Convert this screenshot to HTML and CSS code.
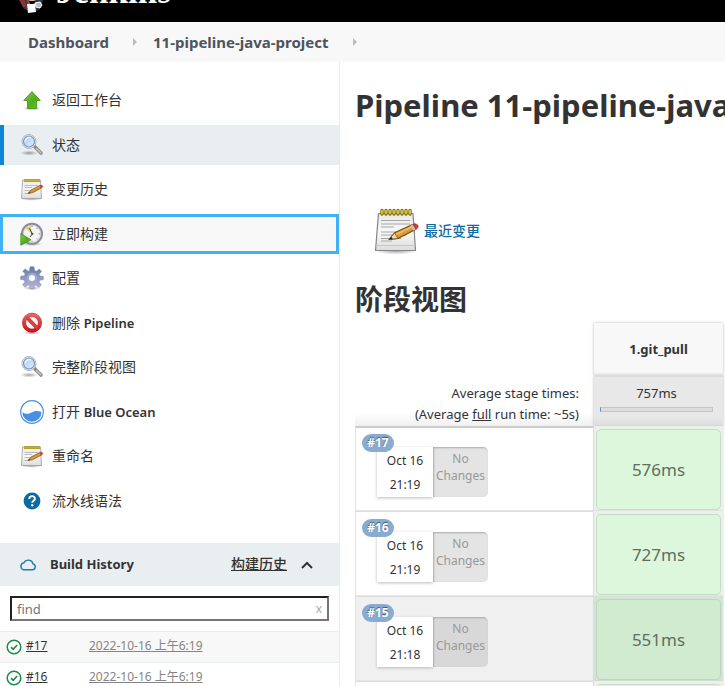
FILE: index.html
```html
<!DOCTYPE html>
<html lang="zh-CN">
<head>
<meta charset="utf-8">
<meta name="viewport" content="width=device-width, initial-scale=1">
<title>11-pipeline-java-project [Jenkins]</title>
<link rel="stylesheet" href="styles.css">
</head>
<body>
<svg class="defs" aria-hidden="true">
  <defs>
    <linearGradient id="g-green" x1="0" y1="0" x2="1" y2="1"><stop offset="0" stop-color="#8bc957"/><stop offset=".55" stop-color="#4fae1c"/><stop offset="1" stop-color="#65ca20"/></linearGradient>
    <linearGradient id="g-paper" x1="0" y1="0" x2="0" y2="1"><stop offset="0" stop-color="#e9e9e9"/><stop offset=".5" stop-color="#f8f8f8"/><stop offset="1" stop-color="#dcdcdc"/></linearGradient>
    <linearGradient id="g-lens" x1="0" y1="0" x2="1" y2="1"><stop offset="0" stop-color="#a9c9ee"/><stop offset="1" stop-color="#e3effb"/></linearGradient>
    <linearGradient id="g-gear" x1="0" y1="0" x2="0" y2="1"><stop offset="0" stop-color="#5d7ba8"/><stop offset="1" stop-color="#c0b6dd"/></linearGradient>
    <linearGradient id="g-red" x1="0" y1="0" x2="0" y2="1"><stop offset="0" stop-color="#e46a6a"/><stop offset="1" stop-color="#cf1515"/></linearGradient>
    <radialGradient id="g-shadow"><stop offset="0" stop-color="#000" stop-opacity=".35"/><stop offset="1" stop-color="#000" stop-opacity="0"/></radialGradient>
    <symbol id="i-up" viewBox="0 0 24 24">
      <ellipse cx="12" cy="20.500" rx="10" ry="2" fill="url(#g-shadow)"/>
      <path d="M12 3.500 20.300 12.500H16.500V20.500H7.500V12.500H3.700Z" fill="url(#g-green)" stroke="#3f9312" stroke-width=".8" stroke-linejoin="round"/>
    </symbol>
    <symbol id="i-search" viewBox="0 0 24 24">
      <ellipse cx="9" cy="20" rx="9" ry="2.500" fill="url(#g-shadow)"/>
      <path d="M15 14 21 20" stroke="#8a8a8a" stroke-width="3.600" stroke-linecap="round"/>
      <path d="M16.500 15.500 20.800 19.800" stroke="#c4c4c4" stroke-width="1.600" stroke-linecap="round"/>
      <circle cx="9" cy="8.500" r="7" fill="#f4f4f4" stroke="#b2b4b2" stroke-width="1"/>
      <circle cx="9" cy="8.500" r="5.500" fill="url(#g-lens)" stroke="#6a96d0" stroke-width="1.100"/>
      <path d="M5.200 8.500a4 4 0 0 1 5.600-3.700" stroke="#e8f2fd" stroke-width="1.500" fill="none"/>
    </symbol>
    <symbol id="i-note" viewBox="0 0 48 48">
      <ellipse cx="23" cy="44" rx="21" ry="3.500" fill="url(#g-shadow)"/>
      <path d="M5.500 6.500H40L42.500 43.500H2.500Z" fill="url(#g-paper)" stroke="#858585" stroke-width="1.200" stroke-linejoin="round"/>
      <path d="M3 38.500H42" stroke="#c8c8c8"/>
      <path d="M8 13.500H37M8 17H37M8 20H21M8 25H37M8 28H33M8 31.500H28M8 34H19" stroke="#a5a7a5" stroke-width="1"/>
      <path d="M9 3.500V7M13 3.500V7M17 3.500V7M21 3.500V7M25 3.500V7M29 3.500V7M33 3.500V7M37 3.500V7" stroke="#7c6c0a" stroke-width="3.400" stroke-linecap="round"/>
      <path d="M9 3.500V6.500M13 3.500V6.500M17 3.500V6.500M21 3.500V6.500M25 3.500V6.500M29 3.500V6.500M33 3.500V6.500M37 3.500V6.500" stroke="#e2cf35" stroke-width="1.700" stroke-linecap="round"/>
      <path d="M16 32.500 21.500 25.800 39.500 17.500 42.500 22.500 25 31.500Z" fill="#d89a38" stroke="#754b0d" stroke-width="1.100" stroke-linejoin="round"/>
      <path d="M16 32.500 21.500 25.800 25 31.500Z" fill="#f0d5a5" stroke="#754b0d" stroke-width=".8"/>
      <path d="M16 32.500 18.300 29.700 19.800 32Z" fill="#222"/>
      <path d="M23 27.500 40 19.300" stroke="#f0c169" stroke-width="1.500"/>
      <path d="M37.500 18.400 40 17.200 43 22.200 40.500 23.500Z" fill="#bfc4c9"/>
      <path d="M40 17.200C44 15.500 47.500 20 43 22.300Z" fill="#e13b30" stroke="#b22520" stroke-width=".8"/>
    </symbol>
    <symbol id="i-note-small" viewBox="0 0 24 24">
      <ellipse cx="11.500" cy="22" rx="10.500" ry="1.800" fill="url(#g-shadow)"/>
      <path d="M2.500 3H20.500L21.500 21.500H1.500Z" fill="url(#g-paper)" stroke="#9a9a9a" stroke-width=".8" stroke-linejoin="round"/>
      <path d="M4.500 8.500H18M4.500 10.500H12M4.500 13.500H15M4.500 16.500H9" stroke="#b4b4b4" stroke-width=".9"/>
      <path d="M4 3.500H20" stroke="#a8952a" stroke-width="3"/>
      <path d="M4.500 3.500H20" stroke="#dccb4c" stroke-width="2.200" stroke-dasharray="1 1"/>
      <path d="M8 16.500 11 13 20 8.500 21.500 11 12.500 15.700Z" fill="#d89a38" stroke="#855a18" stroke-width=".8" stroke-linejoin="round"/>
      <path d="M8 16.500 9.300 15 10 16Z" fill="#222"/>
      <path d="M20 8.500C22 7.500 24 9.700 21.500 11Z" fill="#e13b30" stroke="#c33" stroke-width=".7"/>
    </symbol>
    <symbol id="i-clock" viewBox="0 0 24 24">
      <ellipse cx="12" cy="22" rx="11" ry="2" fill="url(#g-shadow)"/>
      <circle cx="12" cy="11.800" r="10" fill="#f3f3f0" stroke="#8a8aa2" stroke-width="2"/>
      <circle cx="12" cy="11.800" r="8.600" fill="none" stroke="#c5c5cb" stroke-width=".7"/>
      <path d="M12 11.800 6 6.300A8.300 8.300 0 0 1 10.700 4Z" fill="#e2c862"/>
      <path d="M9.500 6.500 12.300 12 10 15" fill="none" stroke="#444" stroke-width="1"/>
      <circle cx="12.300" cy="11.800" r="1.100" fill="#444"/>
      <path d="M12 3.500V5M20 11.800H18.500M12 20.200V18.800M17.500 6 16.500 7M17.500 17.500 16.500 16.500" stroke="#888" stroke-width=".9"/>
      <path d="M.8 11.500 11 17.800.8 23.300Z" fill="url(#g-green)" stroke="#37870c" stroke-width=".7"/>
    </symbol>
    <symbol id="i-gear" viewBox="0 0 24 24">
      <ellipse cx="12" cy="22" rx="9" ry="2" fill="url(#g-shadow)"/>
      <path fill="url(#g-gear)" stroke="#7f8cac" stroke-width=".6" stroke-linejoin="round" fill-rule="evenodd" d="M10 .8H14L14.600 4.500 16.400 5.300 19.400 3 21.500 5.500 19.100 8.200 19.700 10 23.300 10.400V13.600L19.700 14.200 19 16 21.300 19 18.800 21.300 15.900 19 14.200 19.700 13.800 23H10.300L9.700 19.600 8 18.900 5 21.200 2.700 18.700 5 15.800 4.300 14 .7 13.500V10.300L4.400 9.700 5.200 8 2.800 5.200 5.200 2.900 8.100 5.200 9.600 4.600ZM12 8.500a3.500 3.500 0 1 0 0 7 3.500 3.500 0 0 0 0-7Z"/>
      <circle cx="12" cy="12" r="4.600" fill="none" stroke="#a3abcf" stroke-width="1.200"/>
    </symbol>
    <symbol id="i-stop" viewBox="0 0 24 24">
      <ellipse cx="12" cy="21.800" rx="9" ry="1.800" fill="url(#g-shadow)"/>
      <circle cx="12" cy="11.700" r="8" fill="#f4f4f4" stroke="#c23434" stroke-width="4"/>
      <path d="M6.400 6 17.600 17.400" stroke="#c23434" stroke-width="3.600"/>
      <circle cx="12" cy="11.700" r="8" fill="none" stroke="url(#g-red)" stroke-width="3"/>
      <path d="M6.400 6 17.600 17.400" stroke="#df4040" stroke-width="2.600"/>
    </symbol>
    <symbol id="i-ocean" viewBox="0 0 24 24">
      <circle cx="12" cy="12" r="11.300" fill="#fff" stroke="#4a90e2" stroke-width="1.200"/>
      <path d="M2.300 12.300C6 14.300 8.500 14.300 11.500 12.500S17 10.300 21.500 12A9.600 9.600 0 0 1 2.300 12.300Z" fill="#4a90e2"/>
    </symbol>
    <symbol id="i-help" viewBox="0 0 24 24">
      <circle cx="12" cy="12" r="8.400" fill="#0b6aa2"/>
      <path d="M9.300 9.900C9.300 6.300 14.900 6.300 14.900 9.700 14.900 11.800 12.200 11.600 12.200 13.800" fill="none" stroke="#fff" stroke-width="1.900"/>
      <circle cx="12.200" cy="16.200" r="1.200" fill="#fff"/>
    </symbol>
    <symbol id="i-ok" viewBox="0 0 16 16">
      <circle cx="8" cy="8" r="6.800" fill="#fff" stroke="#1e884c" stroke-width="1.500"/>
      <path d="M5 8.200 7.200 10.300 11.100 6" fill="none" stroke="#1e884c" stroke-width="1.600"/>
    </symbol>
  </defs>
</svg>

<header class="page-header">
  <a class="brand" href="#">
    <svg class="brand-mark" viewBox="0 0 28 36" aria-hidden="true">
      <circle cx="14" cy="12" r="11" fill="#f0d6b7"/>
      <path d="M1 22 8 19 13 28 20 20 25 22 22 31 17 34 6 31Z" fill="#2e3c49"/>
      <path d="M1 21 6 20 9 29 5 29Z" fill="#8e3037"/>
      <path d="M8 20 12 25 11 29Z" fill="#d33833"/>
      <path d="M9 26 17 26 18 34 10 35Z" fill="#fff"/>
      <path d="M17 25 22 24 24 27 22 30 18 29Z" fill="#bbb" stroke="#fff"/>
    </svg>
    <span class="brand-name">Jenkins</span>
  </a>
</header>

<nav class="breadcrumbs" aria-label="Breadcrumb">
  <a href="#">Dashboard</a><span class="crumb-arrow"></span>
  <a href="#">11-pipeline-java-project</a><span class="crumb-arrow"></span>
</nav>

<div class="layout">
  <aside class="side">
    <ul class="tasks">
      <li><a class="task" href="#"><svg><use href="#i-up"/></svg><span>返回工作台</span></a></li>
      <li><a class="task task-active" href="#"><svg><use href="#i-search"/></svg><span>状态</span></a></li>
      <li><a class="task" href="#"><svg><use href="#i-note-small"/></svg><span>变更历史</span></a></li>
      <li><a class="task task-focus" href="#"><svg><use href="#i-clock"/></svg><span>立即构建</span></a></li>
      <li><a class="task" href="#"><svg><use href="#i-gear"/></svg><span>配置</span></a></li>
      <li><a class="task" href="#"><svg><use href="#i-stop"/></svg><span>删除 <span class="latin">Pipeline</span></span></a></li>
      <li><a class="task" href="#"><svg><use href="#i-search"/></svg><span>完整阶段视图</span></a></li>
      <li><a class="task" href="#"><svg><use href="#i-ocean"/></svg><span>打开 <span class="latin">Blue Ocean</span></span></a></li>
      <li><a class="task" href="#"><svg><use href="#i-note-small"/></svg><span>重命名</span></a></li>
      <li><a class="task" href="#"><svg><use href="#i-help"/></svg><span>流水线语法</span></a></li>
    </ul>

    <section class="history">
      <div class="history-head">
        <svg class="cloud" viewBox="0 0 18 14" aria-hidden="true"><path d="M4.500 11.800H13.300A3 3 0 0 0 14 5.900 4.800 4.800 0 0 0 5 4.800 3.600 3.600 0 0 0 4.500 11.800Z" fill="none" stroke="#1f78b0" stroke-width="1.400"/></svg>
        <h2 class="history-title">Build History</h2>
        <a class="trend" href="#">构建历史</a>
        <button class="collapse" type="button" aria-label="Collapse"><svg viewBox="0 0 12 8"><path d="M1 7 6 2 11 7" fill="none" stroke="#333" stroke-width="2"/></svg></button>
      </div>
      <div class="search">
        <input type="text" placeholder="find" aria-label="find">
        <button type="button">x</button>
      </div>
      <table class="builds">
        <tr><td class="build-id"><div class="build-link"><svg><use href="#i-ok"/></svg><a href="#">#17</a></div></td><td><a class="build-date" href="#">2022-10-16 上午6:19</a></td></tr>
        <tr><td class="build-id"><div class="build-link"><svg><use href="#i-ok"/></svg><a href="#">#16</a></div></td><td><a class="build-date" href="#">2022-10-16 上午6:19</a></td></tr>
      </table>
    </section>
  </aside>

  <main class="main">
    <h1>Pipeline 11-pipeline-java-project</h1>
    <a class="changes-link" href="#"><svg><use href="#i-note"/></svg>最近变更</a>
    <h2 class="stage-title">阶段视图</h2>
    <table class="stages">
      <colgroup><col class="col-run"><col></colgroup>
      <thead>
        <tr class="names"><td></td><th class="stage-name" scope="col">1.git_pull</th></tr>
        <tr class="totals">
          <td class="average">Average stage times:<br>(Average <u>full</u> run time: ~5s)</td>
          <td class="stage-average">757ms<div class="meter"></div></td>
        </tr>
      </thead>
      <tbody>
        <tr class="run">
          <td class="run-info"><div class="run-box"><span class="badge">#17</span><div class="when"><span>Oct 16</span><span>21:19</span></div><div class="no-changes">No Changes</div></div></td>
          <td class="stage"><div class="stage-time">576ms</div></td>
        </tr>
        <tr class="run">
          <td class="run-info"><div class="run-box"><span class="badge">#16</span><div class="when"><span>Oct 16</span><span>21:19</span></div><div class="no-changes">No Changes</div></div></td>
          <td class="stage"><div class="stage-time">727ms</div></td>
        </tr>
        <tr class="run run-hover">
          <td class="run-info"><div class="run-box"><span class="badge">#15</span><div class="when"><span>Oct 16</span><span>21:18</span></div><div class="no-changes">No Changes</div></div></td>
          <td class="stage"><div class="stage-time">551ms</div></td>
        </tr>
        <tr class="run"><td class="run-info"></td><td class="stage"><div class="stage-time"></div></td></tr>
      </tbody>
    </table>
  </main>
</div>
</body>
</html>
```

FILE: styles.css
```css
* { box-sizing: border-box; }

body {
  margin: 0;
  height: 100vh;
  overflow: hidden;
  background: #fff;
  color: #333;
  font: 14px/20px "Noto Sans", "Noto Sans CJK SC", sans-serif;
}

a { color: inherit; text-decoration: none; }
button { margin: 0; padding: 0; border: 0; background: none; font: inherit; cursor: pointer; }
.defs { position: absolute; width: 0; height: 0; }

.page-header {
  display: flex;
  align-items: flex-end;
  height: 22px;
  padding: 0 18px 8px;
  overflow: hidden;
  background: #000;
}
.brand { display: flex; align-items: flex-end; gap: 10px; color: #fff; }
.brand-mark { width: 28px; height: 36px; }
.brand-name { padding-bottom: 4px; font: bold 35px/36px "Liberation Serif", serif; }

.breadcrumbs {
  display: flex;
  align-items: center;
  height: 40px;
  padding: 0 28px;
  background: #f8f8f8;
  color: #4d545d;
  font: 700 15px/20px "Noto Sans", sans-serif;
}
.crumb-arrow {
  margin: 0 16px 0 24px;
  border: 4px solid transparent;
  border-left-color: #bbb;
  border-right-width: 0;
}

.layout { display: grid; grid-template-columns: 340px minmax(0, 1fr); }
.side { border-right: 1px solid #e8ebed; min-height: calc(100vh - 62px); }

.tasks {
  display: flex;
  flex-direction: column;
  justify-content: space-between;
  min-height: 441px;
  margin: 18px 0 0;
  padding: 0;
  list-style: none;
}
.task {
  display: flex;
  align-items: center;
  gap: 8px;
  height: 40px;
  padding-left: 20px;
}
.latin { font-size: 13px; font-weight: 600; }
.task svg { width: 24px; height: 24px; }
.task-active { padding-left: 16px; border-left: 4px solid #0b87da; background: #e9eef1; }
.task-focus { padding-left: 17px; border: 3px solid #40b1f5; background: #f8f8f8; }

.history { margin-top: 22px; }
.history-head {
  display: flex;
  align-items: center;
  height: 43px;
  padding: 0 26px 2px 19px;
  background: #e9eef1;
}
.cloud { width: 18px; height: 14px; margin: 2px 13px 0 0; }
.history-title { margin: 0 auto 0 0; font-size: 13px; line-height: 20px; }
.trend { font-weight: 500; text-decoration: underline; }
.collapse { display: flex; margin: 2px 0 0 14px; }
.collapse svg { width: 12px; height: 8px; }

.search {
  display: flex;
  margin: 10px 10px 10px;
  border: 2px solid #222;
  border-right-color: #767676;
  border-bottom-color: #767676;
  background: #fff;
}
.search input {
  flex: 1;
  min-width: 0;
  height: 21px;
  padding: 0 5px;
  border: 0;
  outline: 0;
  background: none;
  font: 13px/20px "Noto Sans", sans-serif;
}
.search input::placeholder { color: #757575; opacity: 1; }
.search button { padding: 0 5px; color: #aaa; font-size: 12px; }

.builds { width: 100%; border-collapse: collapse; font-size: 12px; }
.builds td { height: 31px; padding: 0 0 2px; border-top: 1px solid #e9eef1; }
.builds tr:first-child { background: #f8f8f8; }
.build-id { width: 89px; }
.build-link { display: flex; align-items: center; gap: 4px; padding-left: 6px; }
.build-link svg { width: 16px; height: 16px; margin-top: 2px; }
.builds a { text-decoration: underline; }
.build-date { color: #858585; }

.main { min-width: 0; padding: 23px 2px 0 15px; }
h1 {
  margin: 0 -2px 0 0;
  overflow: hidden;
  font-size: 31px;
  line-height: 40px;
  white-space: nowrap;
}
.changes-link {
  display: flex;
  align-items: center;
  gap: 3px;
  margin: 82px 0 0 18px;
  color: #0b6aa2;
  font-weight: 500;
}
.changes-link svg { width: 48px; height: 48px; }
.stage-title { margin: 24px 0 4px; font-size: 28px; line-height: 40px; }

.stages { width: 100%; table-layout: fixed; border-collapse: separate; border-spacing: 0; }
.stages td, .stages th { padding: 0; }
.col-run { width: 239px; }
.names { height: 52px; }
.stage-name { background: #f8f8f8; box-shadow: 0 0 3px #bbb; font-size: 13px; }
.totals { height: 51px; }
.average {
  text-align: right;
  font-size: 13px;
  line-height: 21px;
}
.stages .average { padding: 8px 15px 0 0; background: linear-gradient(#fff 75%, #f0f0f0); vertical-align: top; }
.stages .stage-average {
  padding: 6px 10px 0 6px;
  border-top: 2px solid #ddd;
  background: linear-gradient(#e8e8e8 80%, #ddd);
  box-shadow: 0 0 3px #bbb;
  font-size: 13px;
  text-align: center;
  vertical-align: top;
}
.meter { height: 5px; margin-top: 4px; border: 1px solid #c5c5c5; border-left-color: #5f8fd0; background: #ddd; }

.run { height: 85px; }
.run-info {
  border: 1px solid #e5e5e5;
  border-top-color: #ddd;
  vertical-align: top;
}
.run:first-child .run-info { border-top: 2px solid #ccc; }
.run-box { position: relative; display: flex; width: 111px; margin: 20px 0 0 21px; }
.run:first-child .run-box { margin-top: 19px; }
.badge {
  position: absolute;
  top: -13px;
  left: -15px;
  width: 32px;
  border-radius: 9px;
  background: #88abd0;
  color: #fff;
  font: 700 12px/18px "Noto Sans", sans-serif;
  text-align: center;
  text-shadow: 0 -1px 1px #456;
}
.when {
  display: flex;
  flex-direction: column;
  justify-content: space-between;
  width: 56px;
  height: 50px;
  padding: 4px 0 2px;
  background: #fff;
  box-shadow: 0 1px 3px #bbb;
  font-size: 12px;
  text-align: center;
}
.no-changes {
  width: 55px;
  height: 50px;
  padding: 3px 0;
  border-radius: 0 5px 5px 0;
  background: #e4e4e4;
  box-shadow: inset 1px 1px 2px #aaa;
  color: #999;
  font-size: 12px;
  line-height: 17px;
  text-align: center;
}
.stages .stage { padding: 3px 2px 1px; background: #e9f1e9; box-shadow: 0 0 2px #ccc; }
.stage-time {
  display: grid;
  place-items: center;
  height: 81px;
  border: 1px solid #c5dbc8;
  border-radius: 5px;
  background: #ddf7dd;
  color: #5e6f5e;
  font-size: 17px;
}
.run-hover .run-info { background: #f0f0f0; }
.run-hover .no-changes { background: #d8d8d8; }
.stages .run-hover .stage { background: #d5e5d5; }
.run-hover .stage-time { background: #d0ebd0; border-color: #bcd5be; }
```
